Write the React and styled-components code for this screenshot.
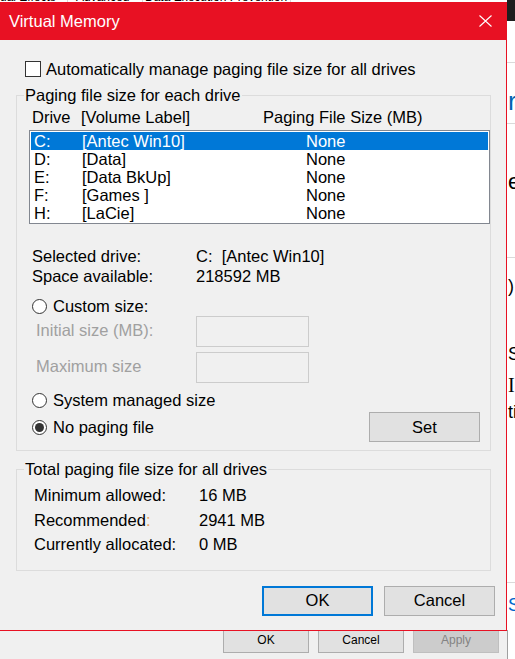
import React from "react";
import styled, { createGlobalStyle } from "styled-components";

const GlobalStyle = createGlobalStyle`
  * { box-sizing: border-box; }
  html, body { margin: 0; padding: 0; }
  body {
    background: #fff;
    font-family: "Liberation Sans", Arial, sans-serif;
    overflow: hidden;
  }
`;

const Screen = styled.div`
  display: grid;
  grid-template-columns: 507px 8px;
  grid-template-rows: 2px 629px 28px;
  width: 515px;
  height: 659px;
  overflow: hidden;
`;

/* background window bits that peek out around the dialog */
const TabStrip = styled.div`
  grid-column: 1;
  grid-row: 1;
  display: flex;
  height: 2px;
  overflow: hidden;
  background: #fff;
  font-size: 12px;
  color: #000;
`;

const BackTab = styled.div`
  width: ${(p) => p.w}px;
  padding-left: ${(p) => p.pad || 0}px;
  border-right: 1px solid #d9d9d9;
  line-height: 12px;
  margin-top: -9px;
  white-space: nowrap;
  overflow: hidden;
`;

const RightStrip = styled.div`
  grid-column: 2;
  grid-row: 1 / 4;
  display: flex;
  flex-direction: column;
  background: #fff;
  overflow: hidden;
`;

const DarkCap = styled.div`
  height: 21px;
  background: #1e1e1e;
`;

const Rule = styled.div`
  height: 1px;
  margin-top: ${(p) => p.top}px;
  background: #dadada;
`;

const Peek = styled.div`
  margin-top: ${(p) => p.top}px;
  padding-left: 1px;
  font-family: ${(p) => (p.serif ? '"Liberation Serif", serif' : '"Liberation Sans", Arial, sans-serif')};
  font-size: ${(p) => p.size}px;
  line-height: ${(p) => p.size}px;
  color: ${(p) => p.color || "#000"};
  white-space: nowrap;
`;

const BackEdge = styled.div`
  flex: 1;
  margin-top: ${(p) => p.top}px;
  border-left: 1px solid #a0a0a0;
`;

const BottomBar = styled.div`
  grid-column: 1;
  grid-row: 3;
  display: flex;
  justify-content: flex-end;
  align-items: flex-start;
  gap: 9px;
  padding-right: 8px;
  background: #f0f0f0;
`;

const BackButton = styled.div`
  width: 86px;
  height: 22px;
  border: 1px solid ${(p) => (p.disabled ? "#bfbfbf" : "#adadad")};
  border-top: none;
  background: ${(p) => (p.disabled ? "#cccccc" : "#e1e1e1")};
  color: ${(p) => (p.disabled ? "#838383" : "#000")};
  font-size: 12px;
  line-height: 18px;
  text-align: center;
`;

/* the dialog itself */
const Dialog = styled.div`
  grid-column: 1;
  grid-row: 2;
  display: flex;
  flex-direction: column;
  background: #f0f0f0;
  border-right: 1px solid #e81123;
  border-bottom: 1px solid #e81123;
  font-size: 16.5px;
  color: #000;
`;

const TitleBar = styled.div`
  height: 38px;
  flex: none;
  display: flex;
  align-items: center;
  justify-content: space-between;
  padding: 0 14px 0 9px;
  background: #e81123;
  color: #fff;
  line-height: 18px;
`;

const CheckRow = styled.label`
  display: flex;
  align-items: center;
  gap: 5px;
  height: 18px;
  margin: 20px 0 0 25px;
  line-height: 18px;
`;

const CheckBox = styled.span`
  width: 16px;
  height: 16px;
  border: 1px solid #333;
  background: #fff;
`;

const Group = styled.fieldset`
  width: 475px;
  margin: ${(p) => p.top}px 0 0 16px;
  padding: 0;
  min-width: 0;
  border: 1px solid #dcdcdc;
`;

const Legend = styled.legend`
  margin-left: 7px;
  padding: 0 1px;
  line-height: 18px;
`;

const GroupBody = styled.div`
  padding: ${(p) => p.pad};
`;

const HeaderRow = styled.div`
  display: grid;
  grid-template-columns: 49px 182px 1fr;
  padding-left: 3px;
  line-height: 18px;
`;

const ListBox = styled.div`
  height: 94px;
  margin-top: 4px;
  padding: 1px;
  border: 1px solid #828790;
  background: #fff;
`;

const DriveRow = styled.div`
  display: grid;
  grid-template-columns: 48px 224px 1fr;
  height: 18px;
  padding-left: 3px;
  line-height: 18px;
  background: ${(p) => (p.selected ? "#0078d7" : "transparent")};
  color: ${(p) => (p.selected ? "#fff" : "#000")};
  white-space: pre;
`;

const InfoGrid = styled.div`
  display: grid;
  grid-template-columns: ${(p) => p.col}px 1fr;
  margin-top: ${(p) => p.top}px;
  padding-left: ${(p) => p.left}px;
  line-height: ${(p) => p.lh}px;
  white-space: pre;
`;

const RadioRow = styled.label`
  display: flex;
  align-items: center;
  justify-content: space-between;
  height: ${(p) => p.h || 20}px;
  margin-top: ${(p) => p.top}px;
  padding: 0 10px 0 3px;
  line-height: 18px;
`;

const RadioLabel = styled.span`
  display: flex;
  align-items: center;
  gap: 6px;
`;

const Radio = styled.span`
  position: relative;
  width: 15px;
  height: 15px;
  border: 1px solid #333;
  border-radius: 50%;
  background: #fff;

  &::after {
    content: "";
    display: ${(p) => (p.checked ? "block" : "none")};
    position: absolute;
    left: 2px;
    top: 2px;
    width: 9px;
    height: 9px;
    border-radius: 50%;
    background: #333;
  }
`;

const SizeRow = styled.div`
  display: flex;
  align-items: center;
  height: 31px;
  margin-top: ${(p) => p.top}px;
  padding-left: 7px;
`;

const SizeLabel = styled.span`
  width: 160px;
  padding-bottom: 3px;
  line-height: 18px;
  color: #a0a0a0;
`;

const SizeInput = styled.span`
  width: 113px;
  height: 31px;
  border: 1px solid #cccccc;
  background: #f0f0f0;
`;

const Button = styled.button`
  width: 111px;
  height: 30px;
  padding: 0;
  border: ${(p) => (p.primary ? "2px solid #0078d7" : "1px solid #adadad")};
  background: #e1e1e1;
  font-family: inherit;
  font-size: 16.5px;
  color: #000;
`;

const ButtonRow = styled.div`
  display: flex;
  justify-content: flex-end;
  gap: 11px;
  margin-top: 15px;
  padding-right: 11px;
`;

const Faint = styled.span`
  color: #e8a060;
`;

const drives = [
  ["C:", "[Antec Win10]", "None"],
  ["D:", "[Data]", "None"],
  ["E:", "[Data BkUp]", "None"],
  ["F:", "[Games ]", "None"],
  ["H:", "[LaCie]", "None"],
];

export default function App() {
  return (
    <>
      <GlobalStyle />
      <Screen>
        <TabStrip>
          <BackTab w={68}>ual Effects</BackTab>
          <BackTab w={75} pad={8}>Advanced</BackTab>
          <BackTab w={148} pad={2}>Data Execution Prevention</BackTab>
        </TabStrip>

        <Dialog>
          <TitleBar>
            <span>Virtual Memory</span>
            <svg width="13" height="12" viewBox="0 0 13 12">
              <path d="M0.5 0.5 L12.5 11.5 M12.5 0.5 L0.5 11.5" stroke="#fff" strokeWidth="1.1" fill="none" />
            </svg>
          </TitleBar>

          <CheckRow>
            <CheckBox />
            <span>Automatically manage paging file size for all drives</span>
          </CheckRow>

          <Group top={8}>
            <Legend>Paging file size for each drive</Legend>
            <GroupBody pad="4px 0 8px 12px">
              <HeaderRow>
                <span>Drive</span>
                <span>[Volume Label]</span>
                <span>Paging File Size (MB)</span>
              </HeaderRow>
              <ListBox>
                {drives.map(([d, label, size], i) => (
                  <DriveRow key={d} selected={i === 0}>
                    <span>{d}</span>
                    <span>{label}</span>
                    <span>{size}</span>
                  </DriveRow>
                ))}
              </ListBox>

              <InfoGrid col={164} top={22} left={3} lh={20}>
                <span>Selected drive:</span>
                <span>C:  [Antec Win10]</span>
                <span>Space available:</span>
                <span>218592 MB</span>
              </InfoGrid>

              <RadioRow top={10}>
                <RadioLabel>
                  <Radio />
                  Custom size:
                </RadioLabel>
              </RadioRow>
              <SizeRow top={0}>
                <SizeLabel>Initial size (MB):</SizeLabel>
                <SizeInput />
              </SizeRow>
              <SizeRow top={5}>
                <SizeLabel>Maximum size</SizeLabel>
                <SizeInput />
              </SizeRow>
              <RadioRow top={7}>
                <RadioLabel>
                  <Radio />
                  System managed size
                </RadioLabel>
              </RadioRow>
              <RadioRow top={2} h={30}>
                <RadioLabel>
                  <Radio checked />
                  No paging file
                </RadioLabel>
                <Button>Set</Button>
              </RadioRow>
            </GroupBody>
          </Group>

          <Group top={9}>
            <Legend>Total paging file size for all drives</Legend>
            <GroupBody pad="5px 0 13px 17px">
              <InfoGrid col={165} top={0} left={0} lh={24.5}>
                <span>Minimum allowed:</span>
                <span>16 MB</span>
                <span>
                  Recommended<Faint>:</Faint>
                </span>
                <span>2941 MB</span>
                <span>Currently allocated:</span>
                <span>0 MB</span>
              </InfoGrid>
            </GroupBody>
          </Group>

          <ButtonRow>
            <Button primary>OK</Button>
            <Button>Cancel</Button>
          </ButtonRow>
        </Dialog>

        <BottomBar>
          <BackButton>OK</BackButton>
          <BackButton>Cancel</BackButton>
          <BackButton disabled>Apply</BackButton>
        </BottomBar>

        <RightStrip>
          <DarkCap />
          <Rule top={41} />
          <Peek top={25} size={26} color="#0063b1">r</Peek>
          <Rule top={9} />
          <Peek top={47} size={22}>e</Peek>
          <Rule top={64} />
          <Peek top={19} size={18}>)</Peek>
          <Peek top={50} size={18}>S</Peek>
          <Peek top={12} size={20} serif>I</Peek>
          <Peek top={8} size={18}>ti</Peek>
          <Rule top={161} />
          <Peek top={13} size={18} color="#0066cc">S</Peek>
          <BackEdge top={16} />
        </RightStrip>
      </Screen>
    </>
  );
}
